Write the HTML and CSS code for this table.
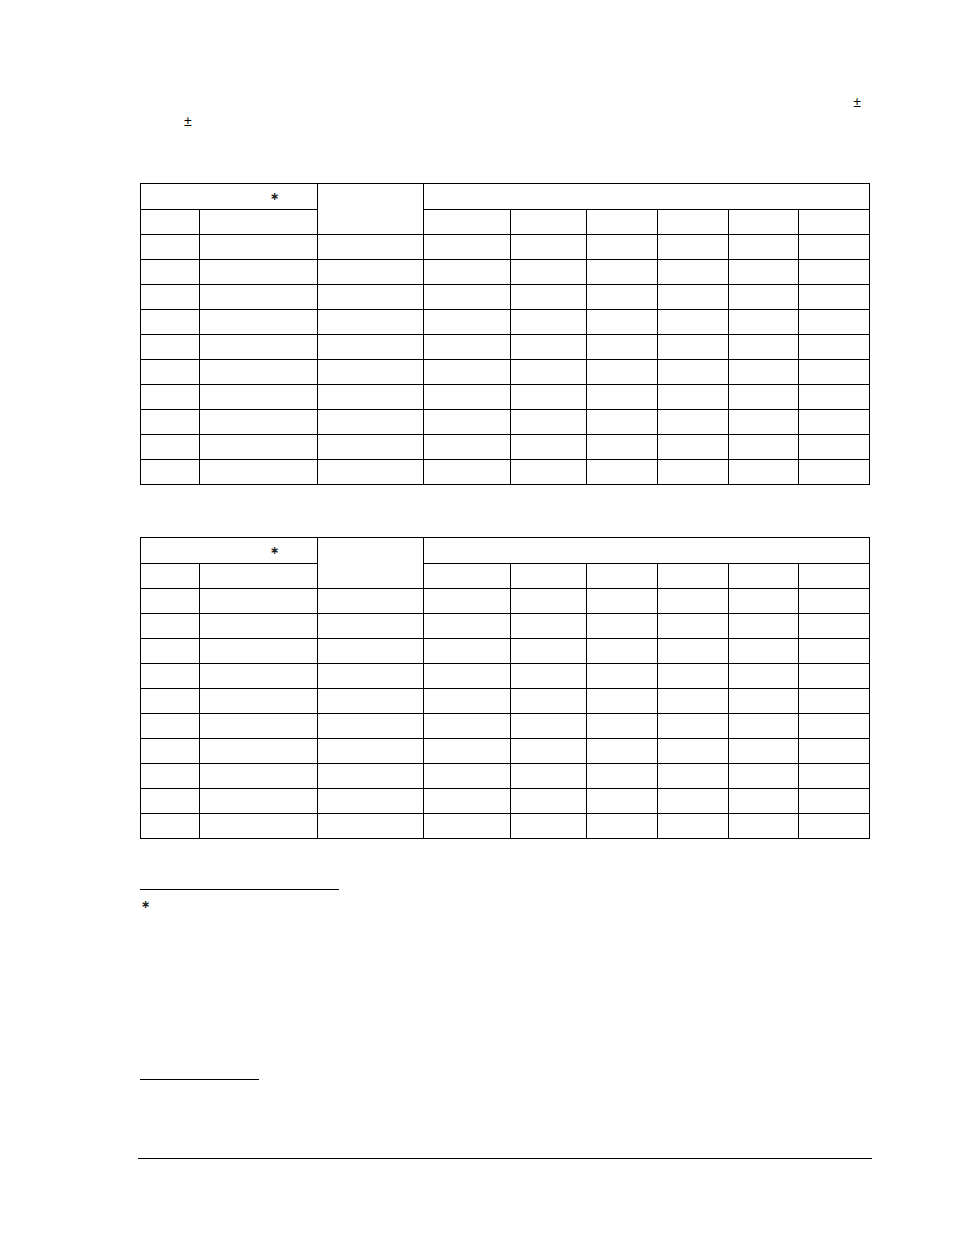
FILE: index.html
```html
<!DOCTYPE html>
<html>
<head>
<meta charset="utf-8">
<link rel="stylesheet" href="styles.css">
</head>
<body>
<div class="page">
  <div class="intro">
    <div class="line line-one"><span class="pm">±</span></div>
    <div class="line line-two"><span class="pm">±</span></div>
  </div>

  <table class="grid grid-first">
    <colgroup>
      <col class="c1"><col class="c2"><col class="c3"><col class="c4"><col class="c5"><col class="c6"><col class="c7"><col class="c8"><col class="c9">
    </colgroup>
    <tr class="head1"><td colspan="2" class="star-cell"><span class="star">∗</span></td><td rowspan="2"></td><td colspan="6"></td></tr>
    <tr><td></td><td></td><td></td><td></td><td></td><td></td><td></td><td></td></tr>
    <tr><td></td><td></td><td></td><td></td><td></td><td></td><td></td><td></td><td></td></tr>
    <tr><td></td><td></td><td></td><td></td><td></td><td></td><td></td><td></td><td></td></tr>
    <tr><td></td><td></td><td></td><td></td><td></td><td></td><td></td><td></td><td></td></tr>
    <tr><td></td><td></td><td></td><td></td><td></td><td></td><td></td><td></td><td></td></tr>
    <tr><td></td><td></td><td></td><td></td><td></td><td></td><td></td><td></td><td></td></tr>
    <tr><td></td><td></td><td></td><td></td><td></td><td></td><td></td><td></td><td></td></tr>
    <tr><td></td><td></td><td></td><td></td><td></td><td></td><td></td><td></td><td></td></tr>
    <tr><td></td><td></td><td></td><td></td><td></td><td></td><td></td><td></td><td></td></tr>
    <tr><td></td><td></td><td></td><td></td><td></td><td></td><td></td><td></td><td></td></tr>
    <tr><td></td><td></td><td></td><td></td><td></td><td></td><td></td><td></td><td></td></tr>
  </table>

  <table class="grid grid-second">
    <colgroup>
      <col class="c1"><col class="c2"><col class="c3"><col class="c4"><col class="c5"><col class="c6"><col class="c7"><col class="c8"><col class="c9">
    </colgroup>
    <tr class="head1"><td colspan="2" class="star-cell"><span class="star">∗</span></td><td rowspan="2"></td><td colspan="6"></td></tr>
    <tr class="head2"><td></td><td></td><td></td><td></td><td></td><td></td><td></td><td></td></tr>
    <tr><td></td><td></td><td></td><td></td><td></td><td></td><td></td><td></td><td></td></tr>
    <tr><td></td><td></td><td></td><td></td><td></td><td></td><td></td><td></td><td></td></tr>
    <tr><td></td><td></td><td></td><td></td><td></td><td></td><td></td><td></td><td></td></tr>
    <tr><td></td><td></td><td></td><td></td><td></td><td></td><td></td><td></td><td></td></tr>
    <tr><td></td><td></td><td></td><td></td><td></td><td></td><td></td><td></td><td></td></tr>
    <tr><td></td><td></td><td></td><td></td><td></td><td></td><td></td><td></td><td></td></tr>
    <tr><td></td><td></td><td></td><td></td><td></td><td></td><td></td><td></td><td></td></tr>
    <tr><td></td><td></td><td></td><td></td><td></td><td></td><td></td><td></td><td></td></tr>
    <tr><td></td><td></td><td></td><td></td><td></td><td></td><td></td><td></td><td></td></tr>
    <tr><td></td><td></td><td></td><td></td><td></td><td></td><td></td><td></td><td></td></tr>
  </table>

  <div class="footnote-rule"></div>
  <div class="footnote"><span class="star">∗</span></div>

  <div class="short-rule"></div>

  <div class="footer-rule"></div>
</div>
</body>
</html>
```

FILE: styles.css
```css
html, body {
  margin: 0;
  padding: 0;
  background: #ffffff;
}

body {
  font-family: "Liberation Serif", "Times New Roman", serif;
  font-size: 13px;
  color: #000000;
}

.page {
  padding: 93px 0 0 140px;
  width: 730px;
}

.intro {
  display: flex;
  flex-direction: column;
}

.line {
  height: 19px;
  line-height: 19px;
  display: flex;
}

.line-one {
  justify-content: flex-end;
  padding-right: 9px;
}

.line-two {
  padding-left: 44px;
}

.pm {
  font-family: "Liberation Sans", Arial, sans-serif;
  font-size: 14px;
  color: #000000;
}

.grid {
  border-collapse: collapse;
  table-layout: fixed;
  width: 729px;
}

.grid-first {
  margin-top: 52px;
}

.grid-second {
  margin-top: 52px;
}

.grid td {
  border: 1px solid #000000;
  height: 24px;
  padding: 0;
  font-size: 12px;
  line-height: 12px;
}

.grid .head1 td {
  height: 25px;
}

.c1 { width: 59px; }
.c2 { width: 118px; }
.c3 { width: 106px; }
.c4 { width: 87px; }
.c5 { width: 76px; }
.c6 { width: 71px; }
.c7 { width: 71px; }
.c8 { width: 70px; }
.c9 { width: 71px; }

.star-cell {
  padding-left: 129px !important;
  vertical-align: middle;
}

.star {
  font-family: "DejaVu Sans", sans-serif;
  font-size: 11px;
  font-weight: bold;
  color: #222222;
}

.footnote-rule {
  margin-top: 50px;
  width: 199px;
  border-top: 1px solid #000000;
}

.footnote {
  height: 20px;
  line-height: 20px;
  padding-left: 1px;
  margin-top: 4px;
}

.short-rule {
  margin-top: 165px;
  width: 119px;
  border-top: 1px solid #000000;
}

.footer-rule {
  margin-top: 78px;
  margin-left: -2px;
  width: 734px;
  border-top: 1px solid #000000;
}
```
